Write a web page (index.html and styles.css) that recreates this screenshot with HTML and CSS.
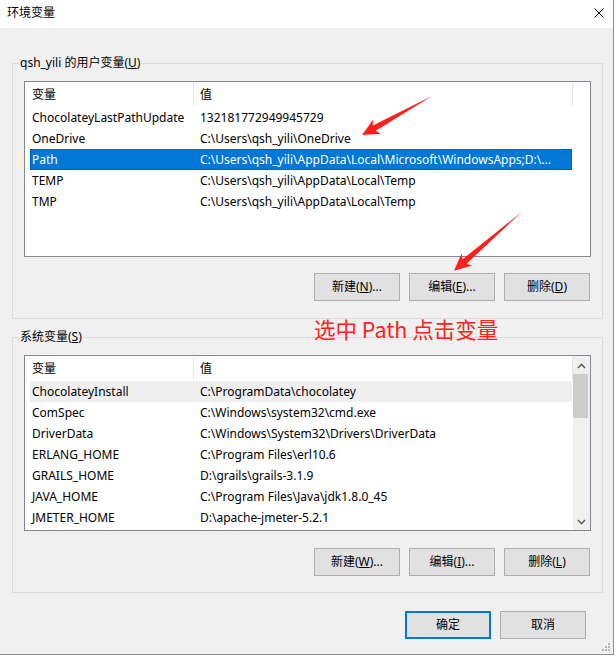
FILE: index.html
```html
<!DOCTYPE html>
<html lang="zh-CN">
<head>
<meta charset="utf-8">
<title>环境变量</title>
<link rel="stylesheet" href="styles.css">
</head>
<body>
<div class="dialog">
  <div class="titlebar">
    <span class="title">环境变量</span>
    <svg class="close" width="10" height="10" viewBox="0 0 10 10"><path d="M0.5 0.5 L9.5 9.5 M9.5 0.5 L0.5 9.5" stroke="#000" stroke-width="1" fill="none"/></svg>
  </div>
  <div class="body">
    <fieldset class="group g1">
      <legend>qsh_yili 的用户变量(<u>U</u>)</legend>
      <div class="list">
        <div class="list-main">
          <div class="lv-head"><div class="hc c1">变量</div><div class="hc c2">值</div></div>
          <div class="row"><span class="cell">ChocolateyLastPathUpdate</span><span class="cell">132181772949945729</span></div>
          <div class="row"><span class="cell">OneDrive</span><span class="cell">C:\Users\qsh_yili\OneDrive</span></div>
          <div class="row sel"><span class="cell">Path</span><span class="cell">C:\Users\qsh_yili\AppData\Local\Microsoft\WindowsApps;D:\...</span></div>
          <div class="row"><span class="cell">TEMP</span><span class="cell">C:\Users\qsh_yili\AppData\Local\Temp</span></div>
          <div class="row"><span class="cell">TMP</span><span class="cell">C:\Users\qsh_yili\AppData\Local\Temp</span></div>
        </div>
      </div>
      <div class="btns">
        <button class="btn">新建(<u>N</u>)...</button>
        <button class="btn">编辑(<u>E</u>)...</button>
        <button class="btn">删除(<u>D</u>)</button>
      </div>
    </fieldset>
    <fieldset class="group g2">
      <legend>系统变量(<u>S</u>)</legend>
      <div class="list">
        <div class="list-main">
          <div class="lv-head"><div class="hc c1">变量</div><div class="hc c2">值</div></div>
          <div class="row hover"><span class="cell">ChocolateyInstall</span><span class="cell">C:\ProgramData\chocolatey</span></div>
          <div class="row"><span class="cell">ComSpec</span><span class="cell">C:\Windows\system32\cmd.exe</span></div>
          <div class="row"><span class="cell">DriverData</span><span class="cell">C:\Windows\System32\Drivers\DriverData</span></div>
          <div class="row"><span class="cell">ERLANG_HOME</span><span class="cell">C:\Program Files\erl10.6</span></div>
          <div class="row"><span class="cell">GRAILS_HOME</span><span class="cell">D:\grails\grails-3.1.9</span></div>
          <div class="row"><span class="cell">JAVA_HOME</span><span class="cell">C:\Program Files\Java\jdk1.8.0_45</span></div>
          <div class="row"><span class="cell">JMETER_HOME</span><span class="cell">D:\apache-jmeter-5.2.1</span></div>
        </div>
        <div class="vscroll">
          <div class="sb-btn up"><svg width="9" height="6" viewBox="0 0 9 6"><path d="M1 5 L4.5 1.5 L8 5" stroke="#606060" stroke-width="1.6" fill="none"/></svg></div>
          <div class="thumb"></div>
          <div class="track"></div>
          <div class="sb-btn down"><svg width="9" height="6" viewBox="0 0 9 6"><path d="M1 1 L4.5 4.5 L8 1" stroke="#606060" stroke-width="1.6" fill="none"/></svg></div>
        </div>
      </div>
      <div class="btns">
        <button class="btn">新建(<u>W</u>)...</button>
        <button class="btn">编辑(<u>I</u>)...</button>
        <button class="btn">删除(<u>L</u>)</button>
      </div>
    </fieldset>
  </div>
  <div class="footer">
    <button class="btn primary">确定</button>
    <button class="btn">取消</button>
  </div>
  <svg class="grip" width="9" height="9" viewBox="0 0 9 9">
    <rect x="7" y="1" width="2" height="2" fill="#b4b4b4"/>
    <rect x="4" y="4" width="2" height="2" fill="#b4b4b4"/>
    <rect x="7" y="4" width="2" height="2" fill="#b4b4b4"/>
    <rect x="1" y="7" width="2" height="2" fill="#b4b4b4"/>
    <rect x="4" y="7" width="2" height="2" fill="#b4b4b4"/>
    <rect x="7" y="7" width="2" height="2" fill="#b4b4b4"/>
  </svg>
  <svg class="annot" width="616" height="656" viewBox="0 0 616 656">
    <polygon points="432,96 372.8,125.6 373,119.7 362,135 380.8,133.7 375.7,130.8" fill="#ff1f1a"/>
    <polygon points="522,211.7 462.6,259.3 461.6,253.5 454,270.7 472.1,265.6 466.5,263.8" fill="#ff1f1a"/>
  </svg>
  <div class="note">选中 Path 点击变量</div>
</div>
</body>
</html>
```
FILE: styles.css
```css
html, body {
  margin: 0;
  padding: 0;
  background: #ffffff;
}

body {
  font-family: "Noto Sans", "Noto Sans CJK SC", sans-serif;
  font-size: 12px;
  color: #000;
}

.dialog {
  position: relative;
  width: 613px;
  height: 654px;
  background: #f0f0f0;
  border-right: 1px solid #8f8f8f;
  border-bottom: 1px solid #8f8f8f;
  display: flex;
  flex-direction: column;
}

.titlebar {
  height: 28px;
  background: #fff;
  display: flex;
  align-items: center;
  justify-content: space-between;
  padding: 0 9px 0 7px;
  flex: none;
}

.title {
  line-height: 16px;
  margin-top: -2px;
}

.close {
  display: block;
  margin-top: -3px;
}

.body {
  padding: 0 10px 0 12px;
}

.group {
  margin: 0;
  border: 1px solid #dcdcdc;
  min-width: 0;
}

.group legend {
  padding: 0 1px;
  margin-left: -5px;
  line-height: 16px;
}

.g1 {
  margin-top: 27px;
  padding: 10px 11px 17px;
}

.g2 {
  margin-top: 10px;
  padding: 10px 11px 16px;
}

.list {
  height: 176px;
  box-sizing: border-box;
  border: 1px solid #828790;
  background: #fff;
  display: flex;
}

.list-main {
  flex: 1;
  min-width: 0;
}

.lv-head {
  height: 25px;
  display: flex;
}

.hc {
  height: 23px;
  margin-top: 1px;
  line-height: 23px;
  border-right: 1px solid #e5e5e5;
  box-sizing: border-box;
  white-space: nowrap;
}

.c1 {
  width: 169px;
  padding-left: 7px;
}

.c2 {
  width: 379px;
  padding-left: 6px;
}

.row {
  display: grid;
  grid-template-columns: 168px 374px;
  width: 542px;
  margin-left: 5px;
  height: 21px;
  line-height: 21px;
  box-sizing: border-box;
}

.cell {
  padding-left: 2px;
  white-space: nowrap;
  overflow: hidden;
}

.row.sel {
  background: #0078d7;
  color: #fff;
  outline: 1px dotted #3a3a3a;
  outline-offset: -1px;
}

.row.hover {
  background: #efefef;
}

.vscroll {
  width: 17px;
  flex: none;
  background: #f0f0f0;
  display: flex;
  flex-direction: column;
}

.sb-btn {
  height: 17px;
  flex: none;
  display: flex;
  justify-content: center;
}

.sb-btn.up {
  align-items: flex-end;
  padding-bottom: 4px;
  box-sizing: border-box;
}

.sb-btn.down {
  align-items: center;
}

.thumb {
  height: 44px;
  margin: 1px 2px 0 0;
  background: #cdcdcd;
  flex: none;
}

.track {
  flex: 1;
}

.btns {
  display: flex;
  justify-content: flex-end;
  gap: 9px;
  padding-right: 1px;
  margin-top: 16px;
}

.g2 .btns {
  margin-top: 17px;
}

.btn {
  width: 86px;
  height: 28px;
  box-sizing: border-box;
  background: #e1e1e1;
  border: 1px solid #adadad;
  font: inherit;
  color: #000;
  padding: 0;
  margin: 0;
  line-height: 16px;
}

.btn.primary {
  border: 2px solid #0078d7;
}

.footer {
  display: flex;
  justify-content: flex-end;
  gap: 9px;
  margin-top: 18px;
  padding-right: 27px;
}

.grip {
  position: absolute;
  right: 3px;
  bottom: 3px;
}

.annot {
  position: absolute;
  left: 0;
  top: 0;
  pointer-events: none;
}

.note {
  position: absolute;
  left: 314px;
  top: 316px;
  font-family: "Noto Sans CJK SC", sans-serif;
  font-size: 21.5px;
  line-height: 26px;
  color: #ff2219;
  white-space: nowrap;
}
```
